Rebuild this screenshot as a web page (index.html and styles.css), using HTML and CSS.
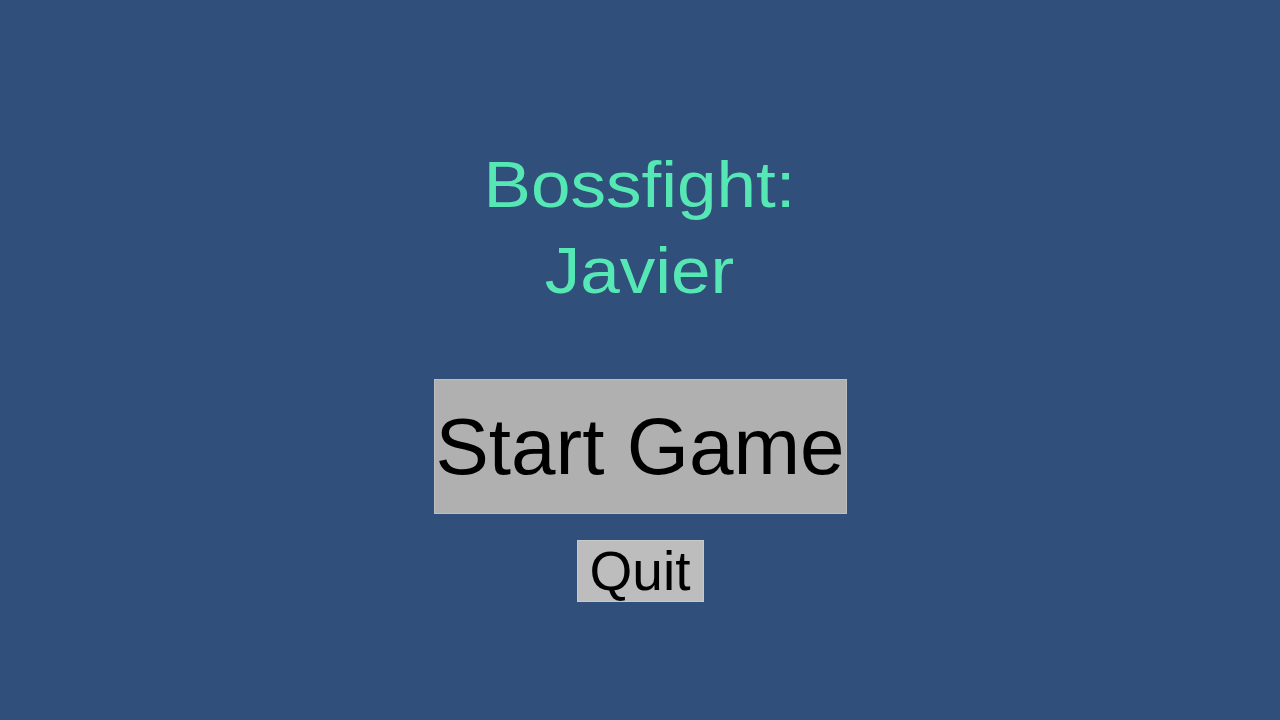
FILE: index.html
```html
<!DOCTYPE html>
<html lang="en">
<head>
<meta charset="utf-8">
<title>Bossfight: Javier</title>
<link rel="stylesheet" href="styles.css">
</head>
<body>
<main class="menu">
  <h1 class="title">Bossfight:<br>Javier</h1>
  <button class="btn btn-start">Start Game</button>
  <button class="btn btn-quit">Quit</button>
</main>
</body>
</html>
```

FILE: styles.css
```css
html, body {
  margin: 0;
  padding: 0;
  width: 1280px;
  height: 720px;
  overflow: hidden;
  background: #314f7b;
  font-family: "Liberation Sans", Arial, sans-serif;
}

.menu {
  display: flex;
  flex-direction: column;
  align-items: center;
  padding-top: 142px;
}

.title {
  margin: 0;
  font-size: 64px;
  font-weight: normal;
  line-height: 86px;
  color: #56e8b4;
  text-align: center;
  transform: scaleX(1.11);
}

.btn {
  display: flex;
  align-items: center;
  justify-content: center;
  padding: 0;
  border: none;
  color: #000;
  font-family: "Liberation Sans", Arial, sans-serif;
  box-shadow: inset 0 0 0 1px rgba(255, 255, 255, 0.18);
}

.btn-start {
  margin-top: 65px;
  width: 413px;
  height: 135px;
  background: #b0b0b0;
  font-size: 80px;
}

.btn-quit {
  margin-top: 26px;
  width: 127px;
  height: 62px;
  background: #bdbdbd;
  font-size: 55px;
}
```
